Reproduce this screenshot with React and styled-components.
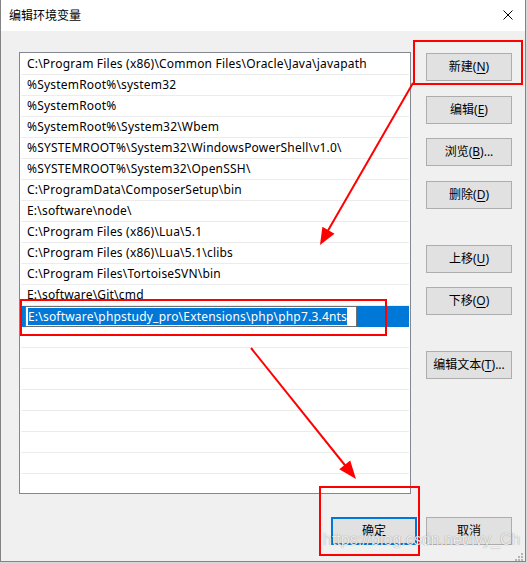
import React from 'react';
import styled, { createGlobalStyle } from 'styled-components';

const GlobalStyle = createGlobalStyle`
  html, body { margin: 0; padding: 0; background: #d8d8d8; }
  body {
    width: 527px; height: 563px; overflow: hidden;
    font-family: "Noto Sans", "Noto Sans CJK SC", sans-serif;
  }
`;

const Window = styled.div`
  position: relative;
  width: 526px;
  height: 562px;
  box-sizing: border-box;
  border: 1px solid #838383;
  border-top: none;
  background: #f0f0f0;
  display: flex;
  flex-direction: column;
`;

const TitleBar = styled.div`
  height: 31px;
  flex: none;
  background: #ffffff;
  display: flex;
  align-items: center;
  justify-content: space-between;
  padding: 0 12px 0 8px;
`;

const Title = styled.span`
  font-family: "Noto Sans CJK SC", sans-serif;
  font-size: 12px;
  color: #000;
  line-height: 16px;
  padding-bottom: 1px;
`;

const CloseIcon = styled.svg`
  width: 10px;
  height: 10px;
  display: block;
  margin-bottom: 1px;
`;

const Body = styled.div`
  flex: 1;
  display: flex;
  flex-direction: column;
  padding: 21px 13px 16px 18px;
`;

const MainRow = styled.div`
  display: flex;
  align-items: flex-start;
  gap: 15px;
`;

const List = styled.div`
  width: 392px;
  height: 442px;
  box-sizing: border-box;
  border: 1px solid #828790;
  background: #fff;
  padding: 1px;
  overflow: hidden;
`;

const Row = styled.div`
  height: 21px;
  box-sizing: border-box;
  border-bottom: ${p => (p.$selected ? 'none' : '1px solid #ececec')};
  background: ${p => (p.$selected ? '#0078d7' : 'transparent')};
  display: flex;
  align-items: center;
  padding-left: ${p => (p.$selected ? '4px' : '6px')};
  font-size: 12px;
  letter-spacing: 0.2px;
  color: #000;
  white-space: nowrap;
`;

const RowText = styled.span`
  line-height: 20px;
`;

const EditBox = styled.div`
  width: 332px;
  height: 21px;
  box-sizing: border-box;
  border: 1px solid #6f6f6f;
  background: #fff;
  display: flex;
  align-items: center;
  padding-left: 2px;
`;

const Selection = styled.span`
  background: #0078d7;
  color: #fff;
  font-size: 12px;
  line-height: 17px;
  display: inline-block;
`;

const ButtonColumn = styled.div`
  display: flex;
  flex-direction: column;
  width: 86px;
`;

const Button = styled.div`
  width: 86px;
  height: 28px;
  box-sizing: border-box;
  margin-top: ${p => p.$top || 0}px;
  background: #e1e1e1;
  border: ${p => (p.$primary ? '2px solid #0078d7' : '1px solid #adadad')};
  display: flex;
  align-items: center;
  justify-content: center;
  font-family: "Noto Sans", "Noto Sans CJK SC", sans-serif;
  font-size: 12px;
  color: #000;
  line-height: 16px;
  white-space: nowrap;
`;

const Key = styled.u`
  text-decoration: underline;
  text-underline-offset: 2px;
`;

const Footer = styled.div`
  display: flex;
  justify-content: flex-end;
  gap: 9px;
  margin-top: 23px;
`;

const Annotations = styled.svg`
  position: absolute;
  left: -1px;
  top: 0;
  width: 527px;
  height: 563px;
  pointer-events: none;
`;

const Watermark = styled.span`
  position: absolute;
  left: 322px;
  top: 531px;
  font-family: "Liberation Sans", Arial, sans-serif;
  font-size: 16px;
  color: rgba(255, 255, 255, 0.85);
  text-shadow: 0 0 1px rgba(0, 0, 0, 0.45);
  white-space: nowrap;
  pointer-events: none;
`;

const paths = [
  'C:\\Program Files (x86)\\Common Files\\Oracle\\Java\\javapath',
  '%SystemRoot%\\system32',
  '%SystemRoot%',
  '%SystemRoot%\\System32\\Wbem',
  '%SYSTEMROOT%\\System32\\WindowsPowerShell\\v1.0\\',
  '%SYSTEMROOT%\\System32\\OpenSSH\\',
  'C:\\ProgramData\\ComposerSetup\\bin',
  'E:\\software\\node\\',
  'C:\\Program Files (x86)\\Lua\\5.1',
  'C:\\Program Files (x86)\\Lua\\5.1\\clibs',
  'C:\\Program Files\\TortoiseSVN\\bin',
  'E:\\software\\Git\\cmd',
];
const editing = 'E:\\software\\phpstudy_pro\\Extensions\\php\\php7.3.4nts';

const sideButtons = [
  { label: '新建', key: 'N', top: 1 },
  { label: '编辑', key: 'E', top: 15 },
  { label: '浏览', key: 'B', top: 14, dots: true },
  { label: '删除', key: 'D', top: 15 },
  { label: '上移', key: 'U', top: 36 },
  { label: '下移', key: 'O', top: 14 },
  { label: '编辑文本', key: 'T', top: 36, dots: true },
];

function arrowHead(tx, ty, fx, fy, len, half) {
  const dx = tx - fx;
  const dy = ty - fy;
  const l = Math.hypot(dx, dy);
  const ux = dx / l;
  const uy = dy / l;
  const bx = tx - ux * len;
  const by = ty - uy * len;
  const nx = -uy;
  const ny = ux;
  return `${tx},${ty} ${bx + nx * half},${by + ny * half} ${bx - nx * half},${by - ny * half}`;
}

export default function App() {
  const empty = 21 - paths.length - 1;
  return (
    <>
      <GlobalStyle />
      <Window>
        <TitleBar>
          <Title>编辑环境变量</Title>
          <CloseIcon viewBox="0 0 10 10">
            <path d="M0.5 0.5 L9.5 9.5 M9.5 0.5 L0.5 9.5" stroke="#000" strokeWidth="1" fill="none" />
          </CloseIcon>
        </TitleBar>
        <Body>
          <MainRow>
            <List>
              {paths.map(p => (
                <Row key={p}>
                  <RowText>{p}</RowText>
                </Row>
              ))}
              <Row $selected>
                <EditBox>
                  <Selection>{editing}</Selection>
                </EditBox>
              </Row>
              {Array.from({ length: empty }).map((_, i) => (
                <Row key={'e' + i} />
              ))}
            </List>
            <ButtonColumn>
              {sideButtons.map(b => (
                <Button key={b.label} $top={b.top}>
                  {b.label}(<Key>{b.key}</Key>){b.dots ? '...' : ''}
                </Button>
              ))}
            </ButtonColumn>
          </MainRow>
          <Footer>
            <Button $primary>确定</Button>
            <Button>取消</Button>
          </Footer>
        </Body>
        <Annotations viewBox="0 0 527 563">
          <g fill="none" stroke="#ff0000" strokeWidth="2">
            <rect x="414" y="41" width="108" height="43" />
            <rect x="21" y="300" width="365" height="35" />
            <rect x="320" y="487" width="99" height="68" />
            <line x1="413" y1="83" x2="326" y2="234" />
            <line x1="251" y1="348" x2="348" y2="469" />
          </g>
          <g fill="#ff0000">
            <polygon points={arrowHead(320, 245, 413, 83, 17, 7)} />
            <polygon points={arrowHead(356, 479, 251, 348, 18, 7)} />
          </g>
          <g fill="#b5b5b5">
            <rect x="521" y="553" width="2" height="2" />
            <rect x="518" y="556" width="2" height="2" />
            <rect x="521" y="556" width="2" height="2" />
            <rect x="515" y="559" width="2" height="2" />
            <rect x="518" y="559" width="2" height="2" />
            <rect x="521" y="559" width="2" height="2" />
          </g>
        </Annotations>
        <Watermark>https://blog.csdn.net/Ivy_Ch</Watermark>
      </Window>
    </>
  );
}
